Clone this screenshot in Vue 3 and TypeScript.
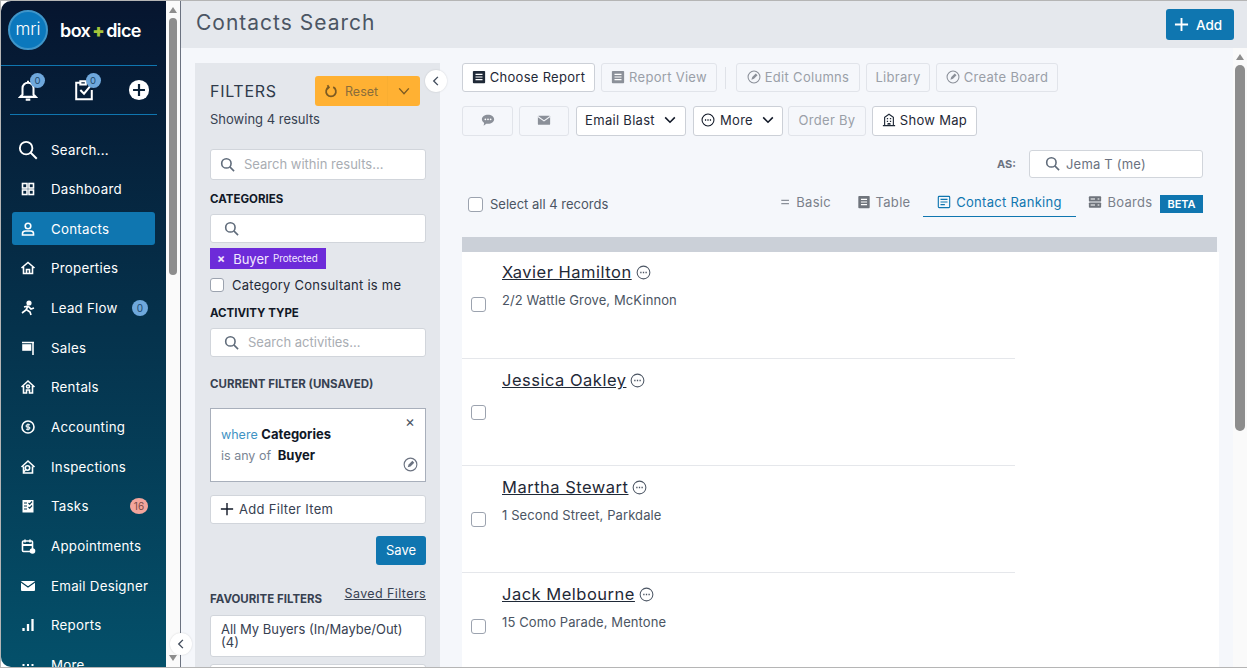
<template>
  <div class="app">
    <aside class="sidebar">
      <div class="brand">
        <div class="mri"><span>mri</span></div>
        <div class="wordmark">box<b>+</b>dice</div>
      </div>
      <div class="quick">
        <div class="quick-item">
          <svg viewBox="0 0 24 24" fill="none" stroke="#fff" stroke-width="2.2"><path d="M6 17V10a6 6 0 0112 0v7l2.500 2.500h-17L6 17zM12 2v2M9.500 22.500h5"/></svg>
          <span class="qbadge">0</span>
        </div>
        <div class="quick-item">
          <svg viewBox="0 0 24 24" fill="none" stroke="#fff" stroke-width="2.2"><path d="M8 4H3.500v18h17V12M8 2.500h6V6H8zM8 12l4 4 9-11"/></svg>
          <span class="qbadge">0</span>
        </div>
        <div class="quick-item">
          <svg viewBox="0 0 24 24"><circle cx="12" cy="12" r="11" fill="#fff"/><path d="M12 5.500v13M5.500 12h13" stroke="#0a2138" stroke-width="2.400"/></svg>
        </div>
      </div>
      <nav class="nav">
        <div v-for="item in navItems" :key="item.label" class="nav-item" :class="{ active: item.label === 'Contacts', big: item.label === 'Search...' }">
          <svg class="nav-icon" viewBox="0 0 16 16" fill="none" stroke="#fff" stroke-width="1.600" v-html="item.icon"></svg>
          <span>{{ item.label }}</span>
          <em v-if="item.badge" class="nav-badge" :class="item.badgeType">{{ item.badge }}</em>
        </div>
      </nav>
    </aside>
    <div class="side-scroll">
      <i class="arrow-up"></i>
      <div class="side-thumb"></div>
      <i class="arrow-down"></i>
    </div>

    <div class="main">
      <header class="topbar">
        <h1>Contacts Search</h1>
        <button class="add-btn">
          <svg viewBox="0 0 16 16" stroke="#fff" stroke-width="2"><path d="M8 1v14M1 8h14"/></svg>
          Add
        </button>
      </header>

      <div class="body">
        <div class="content">
          <section class="filters">
            <div class="filters-head">
              <h2>FILTERS</h2>
              <div class="reset">
                <span class="reset-main">
                  <svg viewBox="0 0 16 16" fill="none" stroke="#7c5a22" stroke-width="2"><path d="M5.500 3.600a5.600 5.600 0 105 0M4 1.500l1.600 2.400L3.500 6"/></svg>
                  Reset
                </span>
                <span class="reset-caret">
                  <svg viewBox="0 0 16 16" fill="none" stroke="#7c5a22" stroke-width="1.600"><path d="M2.500 5l5.500 6 5.500-6"/></svg>
                </span>
              </div>
            </div>
            <p class="showing">Showing 4 results</p>

            <div class="field search-results">
              <svg class="search" viewBox="0 0 16 16" fill="none" stroke="#5f6b7a" stroke-width="1.700"><circle cx="6.800" cy="6.800" r="5"/><path d="M10.500 10.500L15 15"/></svg>
              <span class="ph">Search within results...</span>
            </div>

            <h3 class="cat-title">CATEGORIES</h3>
            <div class="field cat-field">
              <svg class="search" viewBox="0 0 16 16" fill="none" stroke="#5f6b7a" stroke-width="1.700"><circle cx="6.800" cy="6.800" r="5"/><path d="M10.500 10.500L15 15"/></svg>
            </div>
            <div class="tag"><span class="tag-x">×</span>Buyer <small>Protected</small></div>
            <label class="check-row"><i class="box"></i>Category Consultant is me</label>

            <h3 class="activity-title">ACTIVITY TYPE</h3>
            <div class="field cat-field activity-field">
              <svg class="search" viewBox="0 0 16 16" fill="none" stroke="#5f6b7a" stroke-width="1.700"><circle cx="6.800" cy="6.800" r="5"/><path d="M10.500 10.500L15 15"/></svg>
              <span class="ph">Search activities...</span>
            </div>

            <h3 class="current-title">CURRENT FILTER (UNSAVED)</h3>
            <div class="current">
              <span class="current-x">×</span>
              <p><span class="where">where</span> <b>Categories</b></p>
              <p class="second"><span class="anyof">is any of</span> <b>Buyer</b></p>
              <svg class="current-edit" viewBox="0 0 16 16" fill="none" stroke="#6b7280" stroke-width="1.200"><circle cx="8" cy="8" r="6.800"/><path d="M5 11l1-3 4-4 2 2-4 4z" fill="#6b7280" stroke="none"/></svg>
            </div>
            <div class="field add-item">
              <svg viewBox="0 0 16 16" stroke="#111827" stroke-width="1.600"><path d="M8 1v14M1 8h14"/></svg>
              Add Filter Item
            </div>
            <div class="save-row"><button class="save">Save</button></div>

            <div class="fav-head">
              <h3>FAVOURITE FILTERS</h3>
              <a>Saved Filters</a>
            </div>
            <div class="field fav-item">All My Buyers (In/Maybe/Out) (4)</div>
            <div class="field fav-item"></div>
          </section>

          <section class="results">
            <div class="toolbar">
              <button class="btn strong w133">
                <svg viewBox="0 0 16 16"><rect x="1" y="1" width="14" height="14" rx="1" fill="#1f2937"/><path d="M4 5h8M4 8h8M4 11h8" stroke="#fff" stroke-width="1.300"/></svg>
                Choose Report
              </button>
              <button class="btn w116">
                <svg viewBox="0 0 16 16"><rect x="1" y="1" width="14" height="14" rx="1" fill="#8b9099"/><path d="M4 5h8M4 8h8M4 11h8" stroke="#fff" stroke-width="1.300"/></svg>
                Report View
              </button>
              <i class="sep"></i>
              <button class="btn w124">
                <svg viewBox="0 0 16 16" fill="none" stroke="#8b9099" stroke-width="1.200"><circle cx="8" cy="8" r="6.800"/><path d="M5 11l1-3 4-4 2 2-4 4z" fill="#8b9099" stroke="none"/></svg>
                Edit Columns
              </button>
              <button class="btn w64">Library</button>
              <button class="btn w122">
                <svg viewBox="0 0 16 16" fill="none" stroke="#8b9099" stroke-width="1.200"><circle cx="8" cy="8" r="6.800"/><path d="M5 11l1-3 4-4 2 2-4 4z" fill="#8b9099" stroke="none"/></svg>
                Create Board
              </button>
            </div>
            <div class="toolbar second-row">
              <button class="btn icon-only w51">
                <svg viewBox="0 0 16 16"><path d="M8 2c3.900 0 7 2.300 7 5.200s-3.100 5.200-7 5.200c-.7 0-1.300-.1-1.900-.2L3 14.500l.6-3.200C2 10.300 1 8.900 1 7.200 1 4.300 4.100 2 8 2z" fill="#8b9099"/><circle cx="5" cy="7.200" r="1" fill="#fff"/><circle cx="8" cy="7.200" r="1" fill="#fff"/><circle cx="11" cy="7.200" r="1" fill="#fff"/></svg>
              </button>
              <button class="btn icon-only w50">
                <svg viewBox="0 0 16 16"><rect x="1" y="3" width="14" height="10.500" rx="1" fill="#8b9099"/><path d="M1 4l7 5 7-5" fill="none" stroke="#f5f7fb" stroke-width="1.200"/></svg>
              </button>
              <button class="btn strong drop w110">
                Email Blast
                <svg class="caret" viewBox="0 0 16 16" fill="none" stroke="#111827" stroke-width="1.800"><path d="M2.500 5l5.500 5.500L13.500 5"/></svg>
              </button>
              <button class="btn strong drop w90">
                <svg viewBox="0 0 16 16" fill="none" stroke="#111827" stroke-width="1.200"><circle cx="8" cy="8" r="6.800"/><path d="M4.500 8h1.400M7.300 8h1.400M10.100 8h1.400" stroke-width="1.600"/></svg>
                More
                <svg class="caret" viewBox="0 0 16 16" fill="none" stroke="#111827" stroke-width="1.800"><path d="M2.500 5l5.500 5.500L13.500 5"/></svg>
              </button>
              <button class="btn w78">Order By</button>
              <button class="btn strong w105">
                <svg viewBox="0 0 16 16" fill="none" stroke="#1f2937" stroke-width="1.300"><path d="M1 14.500h14M3 14.500V5l5-3.500L13 5v9.500M5.500 6.500h1.500M9 6.500h1.500M5.500 9.500h1.500M9 9.500h1.500M7 14.500V12h2v2.500"/></svg>
                Show Map
              </button>
            </div>
            <div class="as-row">
              <span class="as-label">AS:</span>
              <div class="field as-field">
                <svg class="search" viewBox="0 0 16 16" fill="none" stroke="#5f6b7a" stroke-width="1.700"><circle cx="6.800" cy="6.800" r="5"/><path d="M10.500 10.500L15 15"/></svg>
                <span>Jema T (me)</span>
              </div>
            </div>
            <div class="view-row">
              <label class="select-all"><i class="box"></i>Select all 4 records</label>
              <div class="tabs">
                <div class="tab basic">
                  <svg viewBox="0 0 16 16" stroke="#8b9099" stroke-width="1.600"><path d="M3 6h10M3 10h10"/></svg>
                  Basic
                </div>
                <div class="tab table">
                  <svg viewBox="0 0 16 16"><rect x="1.500" y="1" width="13" height="14" rx="1" fill="#6f747c"/><path d="M4.500 5h7M4.500 8h7M4.500 11h7" stroke="#fff" stroke-width="1.200"/></svg>
                  Table
                </div>
                <div class="tab on">
                  <svg viewBox="0 0 16 16" fill="none" stroke="#0f76b0" stroke-width="1.300"><rect x="1.500" y="1.500" width="13" height="13" rx="1"/><path d="M4 5h8M4 8h8M4 11h5"/></svg>
                  Contact Ranking
                </div>
                <div class="tab boards">
                  <svg viewBox="0 0 16 16"><rect x="1" y="1.500" width="14" height="6" rx="1" fill="#6f747c"/><rect x="1" y="8.500" width="14" height="6" rx="1" fill="#6f747c"/><path d="M3 4.500h5M11 4.500h2M3 11.500h5M11 11.500h2" stroke="#fff" stroke-width="1.200"/></svg>
                  Boards
                </div>
                <span class="beta">BETA</span>
              </div>
            </div>

            <div class="band"></div>
            <div class="list">
              <div v-for="c in contacts" :key="c.name" class="row">
                <i class="box row-check"></i>
                <div class="row-text">
                  <div class="name-line">
                    <a class="name">{{ c.name }}</a>
                    <svg viewBox="0 0 16 16" fill="none" stroke="#4b5563" stroke-width="1.100"><circle cx="8" cy="8" r="6.800"/><path d="M4.500 8h1.400M7.300 8h1.400M10.100 8h1.400" stroke-width="1.600"/></svg>
                  </div>
                  <p class="addr">{{ c.address }}</p>
                </div>
              </div>
            </div>
          </section>
        </div>
        <div class="main-scroll">
          <i class="arrow-up"></i>
          <div class="main-thumb"></div>
        </div>
      </div>
    </div>

    <button class="collapse side-collapse"><svg viewBox="0 0 16 16" fill="none" stroke="#3f4a5a" stroke-width="1.800"><path d="M10.500 2.500L5 8l5.500 5.500"/></svg></button>
    <button class="collapse filter-collapse"><svg viewBox="0 0 16 16" fill="none" stroke="#3f4a5a" stroke-width="1.800"><path d="M10.500 2.500L5 8l5.500 5.500"/></svg></button>
  </div>
</template>

<script setup lang="ts">
interface NavItem {
  label: string
  icon: string
  badge?: string
  badgeType?: string
}

const navItems: NavItem[] = [
  { label: 'Search...', icon: '<circle cx="6.500" cy="6.500" r="5" stroke-width="1.500"/><path d="M10 10l5 5" stroke-width="1.500"/>' },
  { label: 'Dashboard', icon: '<rect x="2.500" y="2.500" width="4.500" height="4.500"/><rect x="9" y="2.500" width="4.500" height="4.500"/><rect x="2.500" y="9" width="4.500" height="4.500"/><rect x="9" y="9" width="4.500" height="4.500"/>' },
  { label: 'Contacts', icon: '<circle cx="8" cy="5" r="2.800"/><path d="M2.500 14v-1.500c0-1.500 1.500-2.500 3-2.500h5c1.500 0 3 1 3 2.500V14z"/>' },
  { label: 'Properties', icon: '<path d="M1.500 8L8 2.500 14.500 8M3.500 7v6.500h9V7M6.500 13.500V9.500h3v4"/>' },
  { label: 'Lead Flow', icon: '<circle cx="9" cy="3" r="1.800" fill="#fff"/><path d="M8 6l-2 4-4 3M8 6l3 3 3-1M7 10l3 2 1 3M4 7l4-1" stroke-width="1.700"/>' },
  { label: 'Sales', icon: '<path d="M2 2.500h12M13 2.500V15"/><rect x="3" y="5" width="7.500" height="5" fill="#fff"/>' },
  { label: 'Rentals', icon: '<path d="M1.500 8L8 2l6.500 6M3.500 7v7h3v-3h3v3h3V7"/><circle cx="8" cy="7.500" r="1.500"/>' },
  { label: 'Accounting', icon: '<circle cx="8" cy="8" r="6"/><path d="M10 5.800H7.200a1.100 1.100 0 000 2.200h1.600a1.100 1.100 0 010 2.200H6M8 4.500v7" stroke-width="1.100"/>' },
  { label: 'Inspections', icon: '<path d="M1.500 8L8 2l6.500 6M3.500 7.500V14h9V7.500"/><circle cx="7.500" cy="9" r="2.200"/><path d="M5.500 11l-2 2"/>' },
  { label: 'Tasks', icon: '<rect x="2.500" y="2" width="11" height="12.500" fill="#fff" stroke="none"/><path d="M4 5h3M4 8h3M4 11h3M8.500 5l1.200 1.200L12 3.500M8.500 9l1.200 1.200L12 7.500" stroke="#0a3d55" stroke-width="1.200"/>' },
  { label: 'Appointments', icon: '<rect x="2.500" y="3" width="10" height="10.500" rx="1"/><path d="M2.500 7h10" stroke-width="2"/><path d="M5 1.500v3M10 1.500v3"/><circle cx="12.500" cy="13" r="2.800" fill="#fff" stroke="none"/>' },
  { label: 'Email Designer', icon: '<rect x="1" y="3" width="14" height="10" rx="1" fill="#fff" stroke="none"/><path d="M1 4l7 5 7-5" stroke="#064059" stroke-width="1.100"/>' },
  { label: 'Reports', icon: '<path d="M3.500 14v-3M8 14V7M12.500 14V2" stroke-width="2.300"/>' },
  { label: 'More', icon: '<path d="M2.500 8h2M7 8h2M11.500 8h2" stroke-width="2"/>' },
]
navItems[4].badge = '0'
navItems[4].badgeType = 'blue'
navItems[9].badge = '16'
navItems[9].badgeType = 'red'

const contacts = [
  { name: 'Xavier Hamilton', address: '2/2 Wattle Grove, McKinnon' },
  { name: 'Jessica Oakley', address: '' },
  { name: 'Martha Stewart', address: '1 Second Street, Parkdale' },
  { name: 'Jack Melbourne', address: '15 Como Parade, Mentone' },
]
</script>

<style>
html, body {
  margin: 0;
  height: 668px;
  overflow: hidden;
}
</style>

<style scoped>
* {
  box-sizing: border-box;
}

.app {
  position: relative;
  display: flex;
  height: 668px;
  overflow: hidden;
  background: #fff;
  border-top: 1px solid #b5b5b5;
  border-left: 1px solid #b5b5b5;
  border-bottom: 1px solid #b5b5b5;
  font-family: Inter, "Liberation Sans", sans-serif;
  font-size: 13px;
  color: #374151;
}

.sidebar {
  width: 165px;
  flex: none;
  overflow: hidden;
  background: linear-gradient(180deg, #06152f 0%, #04506a 100%);
  border-radius: 10px 0 0 10px;
  color: #fff;
}

.brand {
  display: flex;
  align-items: center;
  height: 65px;
  padding: 0 0 6px 7px;
  border-bottom: 1px solid #0f76b0;
  margin: 0 9px 0 0;
}

.mri {
  width: 40px;
  height: 40px;
  flex: none;
  display: flex;
  align-items: center;
  justify-content: center;
  border-radius: 50%;
  background: #0b78bd;
  border: 2px solid #3f95c9;
  font-size: 17px;
  font-weight: 300;
  padding-bottom: 3px;
}

.wordmark {
  margin-left: 12px;
  font-size: 18px;
  font-weight: 600;
  letter-spacing: -0.600px;
  white-space: nowrap;
}

.wordmark b {
  color: #a6c53a;
  margin: 0 2px;
}

.quick {
  display: flex;
  align-items: center;
  height: 49px;
  margin: 0 9px;
  border-bottom: 1px solid #0f76b0;
  padding: 0 7px;
  justify-content: space-between;
}

.quick-item {
  position: relative;
  width: 22px;
  height: 22px;
}

.quick-item svg {
  width: 22px;
  height: 22px;
  display: block;
}

.qbadge {
  position: absolute;
  top: -6px;
  right: -6px;
  width: 15px;
  height: 15px;
  border-radius: 50%;
  background: #6fa8dc;
  color: #214a6e;
  font-size: 9.500px;
  line-height: 15px;
  text-align: center;
}

.nav {
  display: flex;
  flex-direction: column;
  gap: 6.650px;
  margin: 18px 11px 0 11px;
}

.nav-item {
  position: relative;
  display: flex;
  align-items: center;
  height: 33px;
  flex: none;
  padding-left: 8px;
  border-radius: 3px;
  font-size: 13.300px;
  letter-spacing: 0.250px;
  white-space: nowrap;
}

.nav-item.active {
  background: #0f76b0;
}

.nav-icon {
  width: 16px;
  height: 16px;
  flex: none;
  margin-right: 15px;
}

.nav-item.big .nav-icon {
  width: 20px;
  height: 20px;
  margin: 0 13px 0 -2px;
}

.nav-badge {
  position: absolute;
  right: 7px;
  width: 16px;
  height: 16px;
  border-radius: 50%;
  font-size: 10px;
  font-style: normal;
  line-height: 16px;
  text-align: center;
  letter-spacing: 0;
}

.nav-badge.blue {
  background: #6fa8dc;
  color: #214a6e;
}

.nav-badge.red {
  width: 18px;
  background: #f3a59c;
  color: #7a4a46;
}

.side-scroll {
  position: relative;
  width: 14px;
  flex: none;
  background: #fafafa;
  display: flex;
  flex-direction: column;
  align-items: center;
}

.side-thumb {
  width: 8px;
  height: 257px;
  margin-top: 5px;
  border-radius: 4px;
  background: #8d8d8d;
}

.arrow-up {
  width: 0;
  height: 0;
  margin-top: 6px;
  border-left: 4px solid transparent;
  border-right: 4px solid transparent;
  border-bottom: 6px solid #8d8d8d;
}

.arrow-down {
  position: absolute;
  bottom: 6px;
  left: 3px;
  width: 0;
  height: 0;
  border-left: 4px solid transparent;
  border-right: 4px solid transparent;
  border-top: 6px solid #8d8d8d;
}

.main {
  flex: 1;
  min-width: 0;
  display: flex;
  flex-direction: column;
  border-left: 1px solid #6b7280;
}

.topbar {
  display: flex;
  align-items: center;
  justify-content: space-between;
  height: 47px;
  flex: none;
  padding: 0 13px 0 15px;
  background: #e5e8ed;
}

.topbar h1 {
  margin: 0 0 4px;
  font-size: 21px;
  font-weight: 400;
  letter-spacing: 1px;
  color: #4b5563;
}

.add-btn {
  display: flex;
  align-items: center;
  gap: 7px;
  width: 68px;
  height: 31px;
  padding: 0 0 0 8px;
  border: 0;
  border-radius: 3px;
  background: #0f76b0;
  color: #fff;
  font: 500 13.500px Inter, "Liberation Sans", sans-serif;
}

.add-btn svg {
  width: 15px;
  height: 15px;
}

.body {
  flex: 1;
  min-height: 0;
  display: flex;
  background: #f5f7fb;
}

.content {
  flex: 1;
  min-width: 0;
  display: flex;
  overflow: hidden;
  padding: 15px 0 0 14px;
}

.filters {
  width: 245px;
  flex: none;
  padding: 0 14px 0 15px;
  background: #e4e7ec;
}

.filters-head {
  display: flex;
  align-items: center;
  justify-content: space-between;
  height: 30px;
  margin: 13px 6px 0 0;
}

.filters-head h2 {
  margin: 0;
  font-size: 16px;
  font-weight: 400;
  letter-spacing: 0.700px;
  color: #2f3a4a;
}

.reset {
  display: flex;
  width: 105px;
  height: 30px;
  border-radius: 3px;
  background: #ffb133;
  color: #8a6d3b;
}

.reset-main {
  display: flex;
  align-items: center;
  gap: 7px;
  width: 73px;
  padding-left: 9px;
  font-size: 12.500px;
  border-right: 1px solid #f9ae32;
}

.reset-main svg {
  width: 14px;
  height: 14px;
}

.reset-caret {
  flex: 1;
  display: flex;
  align-items: center;
  justify-content: center;
}

.reset-caret svg {
  width: 14px;
  height: 14px;
}

.showing {
  margin: 5px 0 0;
  font-size: 13px;
  line-height: 16px;
  color: #374151;
}

.field {
  display: flex;
  align-items: center;
  background: #fff;
  border: 1px solid #d1d5db;
  border-radius: 3px;
}

.search {
  width: 15px;
  height: 15px;
  flex: none;
}

.ph {
  color: #a9adb3;
  font-size: 13px;
  white-space: nowrap;
}

.search-results {
  height: 31px;
  margin-top: 22px;
  padding: 0 0 1px 9px;
  gap: 9px;
}

.filters h3 {
  margin: 0;
  font-size: 11.500px;
  line-height: 14px;
  font-weight: 700;
  color: #111827;
  white-space: nowrap;
}

.filters .cat-title {
  margin-top: 12px;
}

.cat-field {
  height: 29px;
  margin-top: 8px;
  padding-left: 13px;
  gap: 9px;
}

.tag {
  display: flex;
  align-items: center;
  width: 116px;
  height: 21px;
  margin-top: 5px;
  padding-left: 7px;
  background: #6d2bd9;
  color: #f3e8ff;
  font-size: 13px;
  white-space: nowrap;
}

.tag small {
  margin-left: 4px;
  font-size: 9.800px;
}

.tag-x {
  margin-right: 8px;
  font-weight: 700;
  font-size: 12px;
}

.check-row {
  display: flex;
  align-items: center;
  height: 16px;
  margin-top: 8px;
  font-size: 13px;
  letter-spacing: 0.250px;
  color: #1f2937;
  white-space: nowrap;
}

.box {
  display: block;
  width: 15px;
  height: 15px;
  flex: none;
  background: #fff;
  border: 1px solid #9ca3af;
  border-radius: 3px;
}

.check-row .box {
  width: 14px;
  height: 14px;
  margin-right: 8px;
}

.filters .activity-title {
  margin-top: 13px;
}

.activity-field {
  margin-top: 8px;
  padding-bottom: 1px;
}

.filters .current-title {
  margin-top: 20px;
  color: #374151;
}

.current {
  position: relative;
  height: 74px;
  margin-top: 17px;
  padding: 17px 10px 0;
  background: #fff;
  border: 1px solid #a8afbb;
}

.current p {
  margin: 0;
  font-size: 13px;
  line-height: 16px;
  color: #111827;
}

.current p.second {
  margin-top: 4px;
}

.current b {
  font-weight: 700;
}

.where {
  color: #3f93c4;
  font-size: 12.500px;
}

.anyof {
  color: #7b8594;
  font-size: 12.500px;
  margin-right: 3px;
}

.current-x {
  position: absolute;
  top: 5px;
  right: 10px;
  font-size: 15px;
  line-height: 16px;
  color: #4b5563;
}

.current-edit {
  position: absolute;
  right: 7px;
  bottom: 9px;
  width: 15px;
  height: 15px;
}

.add-item {
  height: 29px;
  margin-top: 13px;
  padding: 0 0 2px 9px;
  gap: 5px;
  font-size: 13px;
  letter-spacing: 0.300px;
  color: #374151;
}

.add-item svg {
  width: 14px;
  height: 14px;
}

.save-row {
  display: flex;
  justify-content: flex-end;
  margin-top: 12px;
}

.save {
  width: 50px;
  height: 29px;
  padding: 0 0 2px;
  border: 0;
  border-radius: 3px;
  background: #0f76b0;
  color: #fff;
  font: 400 13px Inter, "Liberation Sans", sans-serif;
}

.fav-head {
  display: flex;
  align-items: flex-start;
  justify-content: space-between;
  height: 24px;
  margin-top: 22px;
}

.filters .fav-head h3 {
  margin-top: 5px;
  color: #374151;
}

.fav-head a {
  font-size: 12.500px;
  line-height: 14px;
  letter-spacing: 0.400px;
  text-decoration: underline;
  color: #374151;
}

.fav-item {
  height: 42px;
  margin-top: 4px;
  padding: 0 10px;
  font-size: 13px;
  line-height: 13px;
  color: #374151;
}

.fav-item + .fav-item {
  margin-top: 7px;
}

.results {
  flex: 1;
  min-width: 0;
  padding: 0 0 0 22px;
}

.toolbar {
  display: flex;
  align-items: center;
  gap: 6px;
  height: 29px;
}

.toolbar.second-row {
  height: 30px;
  margin-top: 14px;
}

.btn {
  display: flex;
  align-items: center;
  justify-content: center;
  gap: 4px;
  height: 100%;
  padding: 0 0 2px;
  flex: none;
  background: #f5f7fb;
  border: 1px solid #e1e4ea;
  border-radius: 3px;
  color: #9a9fa8;
  font: 400 13px Inter, "Liberation Sans", sans-serif;
  letter-spacing: 0.300px;
  white-space: nowrap;
}

.btn svg {
  width: 14px;
  height: 14px;
  flex: none;
}

.btn.strong {
  background: #fff;
  border-color: #ccd0d7;
  color: #1f2937;
}

.btn.drop {
  gap: 5px;
}

.w133 { width: 133px; }
.w116 { width: 116px; }
.w124 { width: 124px; }
.w64 { width: 64px; }
.w122 { width: 122px; }
.w51 { width: 51px; }
.w50 { width: 50px; }
.w110 { width: 110px; margin-left: 1px; }
.w90 { width: 90px; margin-left: 1px; }
.w78 { width: 78px; margin-left: -1px; }
.w105 { width: 105px; }

.caret {
  margin-left: 3px;
}

.sep {
  width: 1px;
  height: 22px;
  margin: 0 4px 0 2px;
  background: #dfe2e8;
}

.as-row {
  display: flex;
  align-items: center;
  justify-content: flex-end;
  height: 28px;
  margin: 14px 30px 0 0;
}

.as-label {
  margin-right: 13px;
  font-size: 11px;
  font-weight: 700;
  color: #6b7280;
}

.as-field {
  width: 174px;
  height: 28px;
  padding: 0 0 1px 15px;
  gap: 6px;
  color: #6b7280;
  font-size: 13px;
  letter-spacing: 0.200px;
}

.view-row {
  display: flex;
  align-items: flex-start;
  justify-content: space-between;
  height: 59px;
  margin: 0 30px 0 6px;
}

.select-all {
  display: flex;
  align-items: center;
  gap: 7px;
  margin-top: 18px;
  height: 16px;
  font-size: 13px;
  color: #4b5563;
}

.tabs {
  display: flex;
  align-items: flex-start;
  margin-top: 11px;
}

.tab {
  display: flex;
  align-items: center;
  justify-content: center;
  gap: 5px;
  height: 28px;
  padding-bottom: 2px;
  color: #7a808a;
  font-size: 13px;
  letter-spacing: 0.300px;
  white-space: nowrap;
}

.tab svg {
  width: 14px;
  height: 14px;
}

.tab.basic {
  width: 52px;
  margin-right: 25px;
}

.tab.table {
  width: 55px;
  margin-right: 12px;
}

.tab.on {
  width: 153px;
  margin-right: 12px;
  color: #0f76b0;
  border-bottom: 1px solid #0f76b0;
}

.tab.boards {
  width: 65px;
  margin-right: 7px;
}

.beta {
  width: 43px;
  height: 18px;
  margin-top: 6px;
  background: #0f76b0;
  color: #fff;
  font-size: 11px;
  font-weight: 600;
  line-height: 18px;
  text-align: center;
}

.band {
  height: 15px;
  margin-right: 16px;
  background: #cbd0d8;
}

.list {
  margin-right: 14px;
  background: #fff;
  padding-bottom: 40px;
}

.row {
  display: flex;
  width: 553px;
  height: 107px;
  padding: 12px 0 0 9px;
  border-bottom: 1px solid #e5e7eb;
}

.row:first-child {
  padding-top: 11px;
}

.row-check {
  margin: 34px 16px 0 0;
}

.name-line {
  display: flex;
  align-items: center;
  gap: 4px;
  height: 18px;
}

.name-line svg {
  width: 15px;
  height: 15px;
}

.name {
  font-size: 16.500px;
  letter-spacing: 0.500px;
  text-decoration: underline;
  color: #1f2937;
  white-space: nowrap;
}

.addr {
  margin: 11px 0 0;
  font-size: 13px;
  line-height: 16px;
  letter-spacing: 0.100px;
  color: #4b5563;
}

.main-scroll {
  width: 14px;
  flex: none;
  background: #fafafa;
  display: flex;
  flex-direction: column;
  align-items: center;
}

.main-thumb {
  width: 10px;
  height: 366px;
  margin-top: 5px;
  border-radius: 5px;
  background: #8d8d8d;
}

.collapse {
  position: absolute;
  display: flex;
  align-items: center;
  justify-content: center;
  width: 22px;
  height: 22px;
  padding: 0;
  border: 0;
  border-radius: 50%;
  background: #fff;
  box-shadow: 0 0 2px rgba(0, 0, 0, 0.15);
}

.collapse svg {
  width: 12px;
  height: 12px;
}

.side-collapse {
  left: 169px;
  top: 632px;
}

.filter-collapse {
  left: 424px;
  top: 69px;
}
</style>
